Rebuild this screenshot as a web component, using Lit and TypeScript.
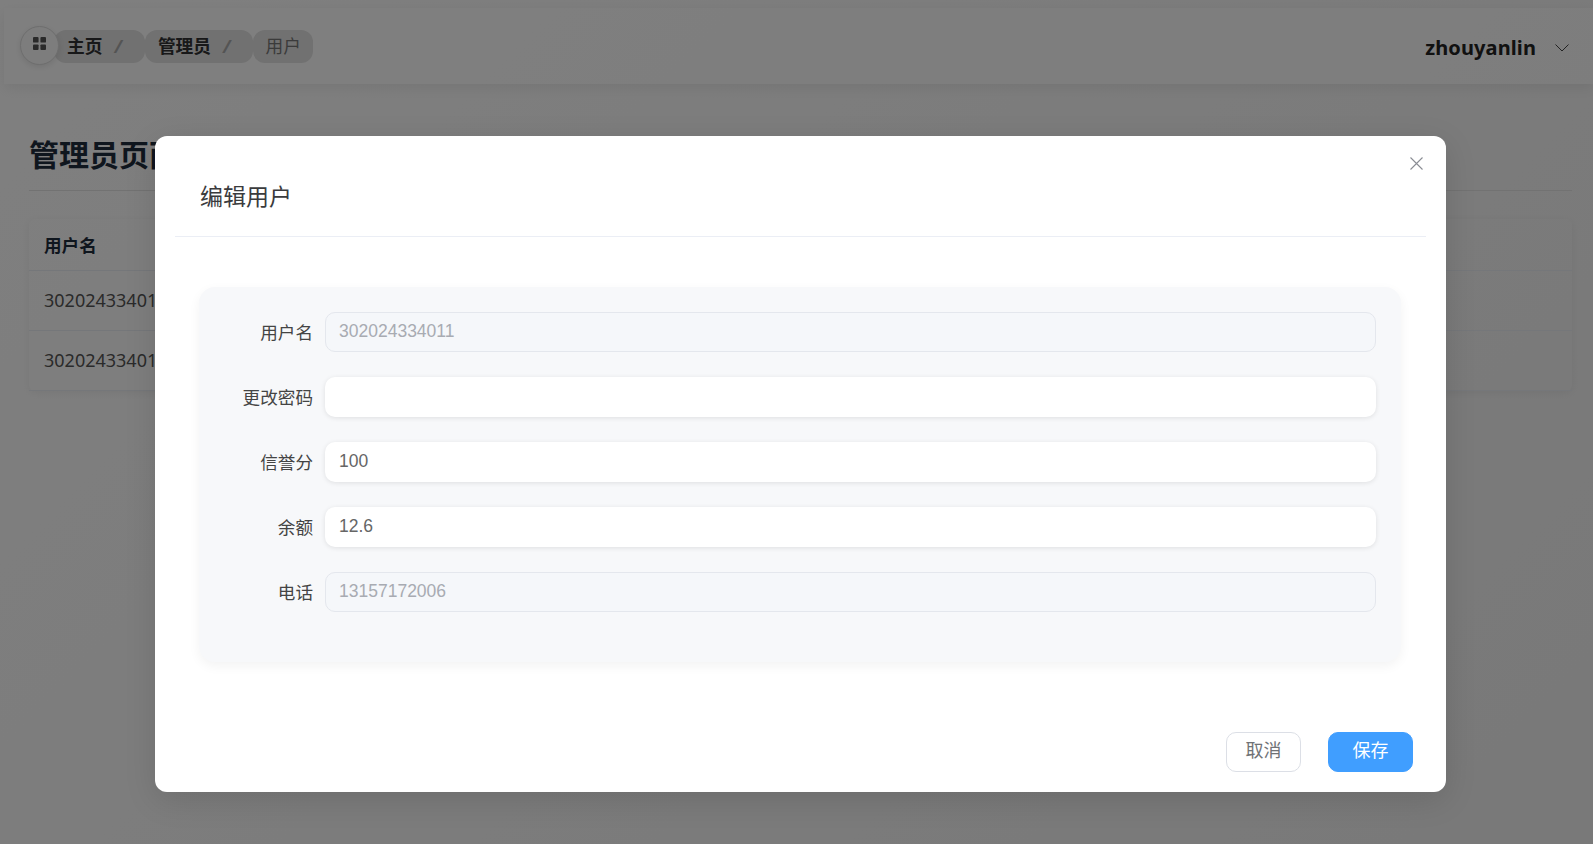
import { LitElement, html, css } from "lit";
import { customElement } from "lit/decorators.js";

const FONT = css`"Noto Sans", "Noto Sans CJK SC", sans-serif`;

@customElement("app-root")
export class AppRoot extends LitElement {
  static styles = css`
    :host { display: block; min-height: 844px; position: relative; overflow: hidden; height: 844px;
      background: linear-gradient(135deg, #ffffff 0%, #f2f2f2 100%);
      font-family: ${FONT}; color: #303133; }
    * { box-sizing: border-box; }
    .header { margin: 8px 0 0 4px; height: 76px; display: flex; align-items: center; padding: 0 24px 0 16px;
      background: rgba(255,255,255,.6); box-shadow: 0 4px 12px rgba(0,0,0,.07); }
    .circle { width: 39px; height: 39px; border-radius: 50%; background: #fafafa; border: 1px solid #dcdcdc; position: relative; z-index: 1;
      display: flex; align-items: center; justify-content: center; margin-top: -1px; box-shadow: 0 2px 6px rgba(0,0,0,.1); padding: 0 1px 4px 0; }
    .crumbs { display: flex; margin-left: -5px; }
    .crumb { height: 33px; border-radius: 12px; background: #e2e2e2; display: flex; align-items: center; padding: 0 12px 0 13px; font-size: 17.7px; font-weight: 700; color: #303133; line-height: 33px; }
    .crumb .sep { margin-left: 12px; margin-right: 11px; color: #a8a8a8; font-weight: 700; font-style: italic; }
    .crumb.last { font-weight: 400; color: #777; padding: 0 12px; }
    .spacer { flex: 1; }
    .user { font-size: 20px; font-weight: 700; color: #222; letter-spacing: .1px; font-family: "Noto Sans", sans-serif; padding-top: 2px; }
    .chev { margin: 3px 0 0 19px; display: block; }
    .main { padding: 0 21px 0 29px; }
    h1 { margin: 0; height: 107px; display: flex; align-items: flex-end; padding-bottom: 15px; font-size: 30px; font-weight: 700; color: #1f2d3d; border-bottom: 1px solid #e4e4e4; }
    .table { margin-top: 28px; border-radius: 6px; box-shadow: 0 2px 8px rgba(0,0,0,.06); font-size: 18px; color: #555; }
    .row { height: 60px; display: flex; align-items: center; padding: 0 0 1px 15px; border-bottom: 1px solid #ebeef5; }
    .row.head { height: 52px; font-weight: 700; color: #1f2d3d; font-size: 17.6px; }
    .overlay { position: absolute; inset: 0; z-index: 5; background: rgba(0,0,0,.5); }
    .dialog { position: absolute; z-index: 6; left: 155px; top: 136px; width: 1291px; height: 656px; background: #fff; border-radius: 12px; box-shadow: 0 8px 32px rgba(0,0,0,.12); display: flex; flex-direction: column; }
    .d-head { margin: 0 20px; height: 101px; padding: 42px 0 0 25px; border-bottom: 1px solid #ebeef5; font-size: 23px; line-height: 36px; color: #3a3b3d; }
    .close { position: absolute; z-index: 7; top: 157px; left: 1410px; }
    .card { margin: 50px 45px 0 44px; height: 375px; background: #f7f8fa; border-radius: 16px; box-shadow: 0 4px 12px rgba(0,0,0,.05); padding: 25px 25px 0 0; display: flex; flex-direction: column; gap: 25px; }
    .item { display: grid; grid-template-columns: 114px 1fr; column-gap: 12px; align-items: center; height: 40px; }
    label { text-align: right; font-size: 17.6px; color: #444; padding-bottom: 1px; line-height: 26px; }
    input { width: 100%; height: 40px; border: 1px solid transparent; border-radius: 10px; background: #fff; padding: 0 13px 2px; font-family: "Liberation Sans", sans-serif; font-size: 17.5px; color: #666; outline: none; box-shadow: 0 1px 5px rgba(0,0,0,.1); }
    input:disabled { background: #f5f7fa; border-color: #e4e7ed; color: #a8abb2; box-shadow: none; -webkit-text-fill-color: #a8abb2; opacity: 1; }
    .foot { margin-top: auto; display: flex; justify-content: flex-end; gap: 27px; padding: 0 33px 20px 0; }
    button { height: 40px; border-radius: 10px; font-family: inherit; font-size: 18px; padding: 0 0 4px; line-height: 1; }
    .cancel { width: 75px; background: #fff; border: 1px solid #dcdfe6; color: #707276; }
    .save { width: 85px; background: #409eff; border: 1px solid #409eff; color: #fff; }
  `;

  render() {
    const fields: [string, string, boolean][] = [
      ["用户名", "302024334011", true],
      ["更改密码", "", false],
      ["信誉分", "100", false],
      ["余额", "12.6", false],
      ["电话", "13157172006", true],
    ];
    return html`
      <div class="header">
        <div class="circle">
          <svg width="13" height="13" viewBox="0 0 14 14" fill="#555">
            <rect x="0" y="0" width="6" height="6" rx="1"></rect><rect x="8" y="0" width="6" height="6" rx="1"></rect>
            <rect x="0" y="8" width="6" height="6" rx="1"></rect><rect x="8" y="8" width="6" height="6" rx="1"></rect>
          </svg>
        </div>
        <div class="crumbs">
          <div class="crumb">主页<span class="sep">/</span></div>
          <div class="crumb">管理员<span class="sep">/</span></div>
          <div class="crumb last">用户</div>
        </div>
        <div class="spacer"></div>
        <span class="user">zhouyanlin</span>
        <svg class="chev" width="14" height="8" viewBox="0 0 14 8" fill="none" stroke="#444" stroke-width="1"><path d="M0.5 0.5 L7 7 L13.5 0.5"></path></svg>
      </div>
      <div class="main">
        <h1>管理员页面</h1>
        <div class="table">
          <div class="row head">用户名</div>
          <div class="row">302024334011</div>
          <div class="row">302024334012</div>
        </div>
      </div>
      <div class="overlay"></div>
      <div class="dialog">
        <div class="d-head">编辑用户</div>
        <div class="card">
          ${fields.map(([l, v, d]) => html`<div class="item"><label>${l}</label><input .value=${v} ?disabled=${d} /></div>`)}
        </div>
        <div class="foot">
          <button class="cancel">取消</button>
          <button class="save">保存</button>
        </div>
      </div>
      <svg class="close" width="13" height="13" viewBox="0 0 13 13" fill="none" stroke="#8a8d94" stroke-width="1.1"><path d="M0.5 0.5 L12.5 12.5 M12.5 0.5 L0.5 12.5"></path></svg>
    `;
  }
}
